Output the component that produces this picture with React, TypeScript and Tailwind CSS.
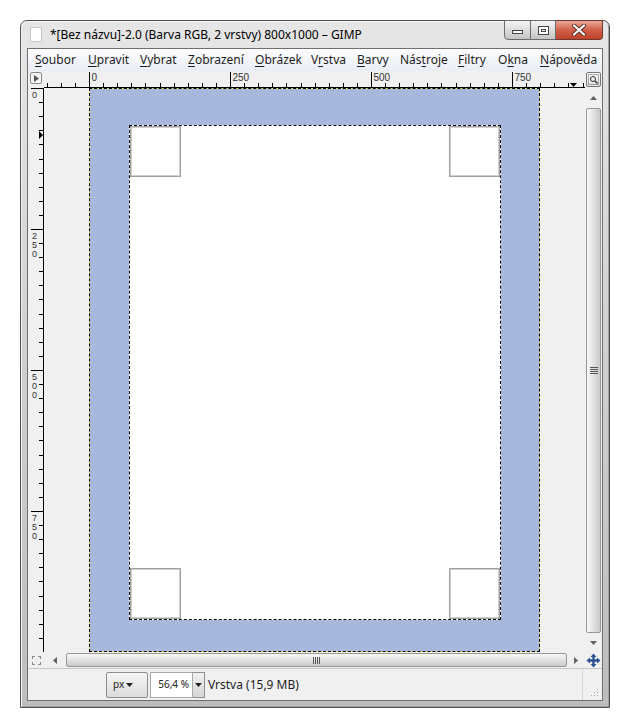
import React from 'react';

const SCALE = 0.564;

const menu = [
  { pre: '', u: 'S', post: 'oubor', w: 'w-[53px]' },
  { pre: '', u: 'U', post: 'pravit', w: 'w-[52px]' },
  { pre: '', u: 'V', post: 'ybrat', w: 'w-[48px]' },
  { pre: '', u: 'Z', post: 'obrazení', w: 'w-[67px]' },
  { pre: '', u: 'O', post: 'brázek', w: 'w-[56px]' },
  { pre: 'V', u: 'r', post: 'stva', w: 'w-[46px]' },
  { pre: '', u: 'B', post: 'arvy', w: 'w-[43px]' },
  { pre: 'Nás', u: 't', post: 'roje', w: 'w-[58px]' },
  { pre: '', u: 'F', post: 'iltry', w: 'w-[40px]' },
  { pre: 'O', u: 'k', post: 'na', w: 'w-[42px]' },
  { pre: '', u: 'N', post: 'ápověda', w: 'w-[60px]' },
];

function range(from: number, to: number, step: number) {
  const out: number[] = [];
  for (let v = from; v <= to; v += step) out.push(v);
  return out;
}

// top ruler, origin 45px from the left edge
function HRuler() {
  const ticks = range(-75, 950, 25);
  return (
    <svg width="541" height="17" className="block">
      <line x1="0" y1="16.5" x2="541" y2="16.5" stroke="#000" />
      {ticks.map((t) => {
        const x = Math.round(45 + t * SCALE) + 0.5;
        if (t % 250 === 0) {
          return (
            <g key={t}>
              <line x1={x} y1="1" x2={x} y2="17" stroke="#000" />
              <text x={x + 2} y="10" fontSize="10" fill="#333" fontFamily="Liberation Sans, sans-serif">
                {t}
              </text>
            </g>
          );
        }
        return <line key={t} x1={x} y1="12" x2={x} y2="17" stroke="#000" />;
      })}
      <polygon points="526,12 533,12 529.5,16" fill="#000" />
    </svg>
  );
}

function VRuler() {
  const ticks = range(0, 975, 25);
  return (
    <svg width="16" height="564" className="block">
      <line x1="15.5" y1="0" x2="15.5" y2="564" stroke="#000" />
      {ticks.map((t) => {
        const y = Math.round(t * SCALE) + 0.5;
        if (t % 250 === 0) {
          const digits = String(t).split('');
          return (
            <g key={t}>
              <line x1="3" y1={y} x2="16" y2={y} stroke="#000" />
              {digits.map((d, i) => (
                <text key={i} x="4" y={y + 9 + i * 9} fontSize="9" fill="#333" fontFamily="Liberation Sans, sans-serif">
                  {d}
                </text>
              ))}
            </g>
          );
        }
        return <line key={t} x1="11" y1={y} x2="16" y2={y} stroke="#000" />;
      })}
      <polygon points="11,43 15,47 11,51" fill="#000" />
    </svg>
  );
}

function CaptionButtons() {
  return (
    <div className="absolute right-[6px] top-[-1px] flex h-[20px]">
      <div className="flex h-full w-[27px] items-end justify-center rounded-bl-[4px] border border-[#6b6b6b] bg-gradient-to-b from-[#f4f4f4] via-[#dcdcdc] to-[#c4c4c4] pb-[5px]">
        <div className="h-[4px] w-[11px] border border-[#444] bg-white" />
      </div>
      <div className="flex h-full w-[25px] items-center justify-center border-y border-r border-[#6b6b6b] bg-gradient-to-b from-[#f4f4f4] via-[#dcdcdc] to-[#c4c4c4]">
        <div className="flex h-[9px] w-[11px] items-center justify-center border border-[#444] bg-white">
          <div className="h-[3px] w-[5px] border border-[#444]" />
        </div>
      </div>
      <div className="flex h-full w-[47px] items-center justify-center rounded-br-[4px] border-y border-r border-[#6b3b30] bg-gradient-to-b from-[#e8a898] via-[#d0604a] to-[#c04028]">
        <svg width="14" height="12" viewBox="0 0 14 12">
          <path d="M2 1.5 L12 10.5 M12 1.5 L2 10.5" stroke="#5a2a20" strokeWidth="4" strokeLinecap="round" />
          <path d="M2 1.5 L12 10.5 M12 1.5 L2 10.5" stroke="#fff" strokeWidth="2.2" strokeLinecap="round" />
        </svg>
      </div>
    </div>
  );
}

function Corner() {
  return (
    <div className="h-[51px] w-[51px] border border-[#a0a0a0] bg-white">
      <div className="h-full w-full border border-[#d0d0d0]" />
    </div>
  );
}

export default function App() {
  return (
    <div
      className="h-[728px] w-[630px] bg-white pl-[20px] pt-[20px]"
      style={{ fontFamily: '"Noto Sans", "Open Sans", sans-serif' }}
    >
      <div className="relative flex h-[688px] w-[590px] flex-col rounded-t-[7px] border border-[#505050] bg-gradient-to-b from-[#e6e6e6] via-[#cfcfcf] to-[#bdbdbd] px-[6px] pb-[6px] pt-[27px] shadow-[inset_1px_1px_0_#f4f4f4,inset_-1px_-1px_0_#a0a0a0]">
        {/* title bar */}
        <div className="absolute left-[9px] top-[6px] flex items-center gap-[8px]">
          <div className="h-[15px] w-[12px] border border-[#c8c8c8] bg-white" />
          <span className="text-[12px] leading-none text-black">
            *[Bez názvu]-2.0 (Barva RGB, 2 vrstvy) 800x1000 – GIMP
          </span>
        </div>
        <CaptionButtons />

        {/* client */}
        <div className="flex flex-1 flex-col border border-[#6f6f6f] bg-[#f0f0f0]">
          {/* menu */}
          <div className="flex h-[22px] items-center bg-gradient-to-b from-[#fdfdfe] to-[#e9edf4] pl-[7px] text-[12px] text-[#1e1e1e]">
            {menu.map((m) => (
              <span key={m.u + m.post} className={`${m.w} shrink-0 whitespace-nowrap`}>
                {m.pre}
                <span className="underline underline-offset-2">{m.u}</span>
                {m.post}
              </span>
            ))}
          </div>

          {/* rulers row */}
          <div className="flex h-[17px]">
            <div className="flex w-[16px] items-start justify-center pt-[1px]">
              <div className="flex h-[12px] w-[12px] items-center justify-center rounded-[2px] border border-[#8a8a8a] bg-[#f4f4f4]">
                <svg width="6" height="7" viewBox="0 0 6 7">
                  <polygon points="1,0 6,3.5 1,7" fill="#555" />
                </svg>
              </div>
            </div>
            <HRuler />
            <div className="flex w-[17px] items-center justify-center">
              <div className="flex h-[15px] w-[15px] items-center justify-center rounded-[2px] border border-[#777] bg-gradient-to-b from-[#fafafa] to-[#dedede]">
                <svg width="11" height="11" viewBox="0 0 11 11">
                  <rect x="0.5" y="0.5" width="10" height="10" fill="none" stroke="#666" strokeDasharray="1 1" />
                  <circle cx="5" cy="5" r="2.5" fill="none" stroke="#333" />
                  <line x1="7" y1="7" x2="9.5" y2="9.5" stroke="#333" strokeWidth="1.5" />
                </svg>
              </div>
            </div>
          </div>

          {/* main */}
          <div className="flex h-[564px]">
            <VRuler />
            <div className="flex-1 overflow-hidden pl-[45px]">
              <div className="h-[564px] w-[451px] border border-[#dfe86e] bg-[#a7b8dc] pl-[39px] pt-[36px] outline-1 -outline-offset-1 outline-black outline-dashed">
                <div className="flex h-[495px] w-[372px] flex-col justify-between border border-dashed border-black bg-white">
                  <div className="flex justify-between">
                    <Corner />
                    <Corner />
                  </div>
                  <div className="flex justify-between">
                    <Corner />
                    <Corner />
                  </div>
                </div>
              </div>
            </div>
            {/* vertical scrollbar */}
            <div className="flex w-[17px] flex-col bg-[#f0f0f0]">
              <div className="flex h-[20px] items-center justify-center">
                <svg width="7" height="4" viewBox="0 0 7 4">
                  <polygon points="0,4 7,4 3.5,0" fill="#606060" />
                </svg>
              </div>
              <div className="mx-[1px] flex flex-1 items-center justify-center rounded-[2px] border border-[#979797] bg-gradient-to-r from-[#f8f8f8] via-[#e2e2e2] to-[#c9c9c9]">
                <div className="flex flex-col gap-[1px]">
                  <div className="h-[1px] w-[8px] bg-[#555]" />
                  <div className="h-[1px] w-[8px] bg-[#555]" />
                  <div className="h-[1px] w-[8px] bg-[#555]" />
                  <div className="h-[1px] w-[8px] bg-[#555]" />
                </div>
              </div>
              <div className="flex h-[19px] items-center justify-center">
                <svg width="7" height="4" viewBox="0 0 7 4">
                  <polygon points="0,0 7,0 3.5,4" fill="#606060" />
                </svg>
              </div>
            </div>
          </div>

          {/* horizontal scrollbar row */}
          <div className="flex h-[16px]">
            <div className="flex w-[16px] items-center justify-center">
              <div className="h-[9px] w-[9px] border border-dashed border-[#8a8a8a]" />
            </div>
            <div className="flex w-[541px]">
              <div className="flex w-[22px] items-center justify-center">
                <svg width="4" height="7" viewBox="0 0 4 7">
                  <polygon points="4,0 4,7 0,3.5" fill="#606060" />
                </svg>
              </div>
              <div className="my-[1px] flex flex-1 items-center justify-center rounded-[2px] border border-[#979797] bg-gradient-to-b from-[#f8f8f8] via-[#e2e2e2] to-[#c9c9c9]">
                <div className="flex gap-[1px]">
                  <div className="h-[7px] w-[1px] bg-[#555]" />
                  <div className="h-[7px] w-[1px] bg-[#555]" />
                  <div className="h-[7px] w-[1px] bg-[#555]" />
                  <div className="h-[7px] w-[1px] bg-[#555]" />
                </div>
              </div>
              <div className="flex w-[18px] items-center justify-center">
                <svg width="4" height="7" viewBox="0 0 4 7">
                  <polygon points="0,0 0,7 4,3.5" fill="#606060" />
                </svg>
              </div>
            </div>
            <div className="flex w-[17px] items-center justify-center">
              <svg width="15" height="15" viewBox="0 0 15 15">
                <path d="M7.5 0.5 L10.5 4 H8.7 V6.3 H11 V4.5 L14.5 7.5 L11 10.5 V8.7 H8.7 V11 H10.5 L7.5 14.5 L4.5 11 H6.3 V8.7 H4 V10.5 L0.5 7.5 L4 4.5 V6.3 H6.3 V4 H4.5 Z" fill="#2d5190" />
              </svg>
            </div>
          </div>

          {/* status bar */}
          <div className="flex h-[32px] border-t border-[#c8c8c8]">
            <div className="flex flex-1 items-center border-r border-[#d4d4d4] pl-[78px]">
              <div className="flex h-[26px] w-[42px] items-center gap-[2px] rounded-[2px] border border-[#8e8e8e] bg-gradient-to-b from-[#f6f6f6] to-[#dcdcdc] pl-[6px] text-[10px] text-[#222]">
                px
                <svg width="7" height="4" viewBox="0 0 7 4">
                  <polygon points="0,0 7,0 3.5,4" fill="#222" />
                </svg>
              </div>
              <div className="ml-[2px] flex h-[26px] w-[43px] items-center justify-end border border-[#a8a8a8] bg-white pr-[3px] text-[10px] text-[#222]">
                56,4 %
              </div>
              <div className="flex h-[26px] w-[12px] items-center justify-center border-y border-r border-[#8e8e8e] bg-gradient-to-b from-[#f2f2f2] to-[#d6d6d6]">
                <svg width="7" height="4" viewBox="0 0 7 4">
                  <polygon points="0,0 7,0 3.5,4" fill="#222" />
                </svg>
              </div>
              <span className="ml-[3px] text-[12px] text-[#1e1e1e]">Vrstva (15,9 MB)</span>
            </div>
            <div className="flex w-[19px] items-end justify-end pb-[3px] pr-[3px]">
              <svg width="8" height="8" viewBox="0 0 8 8">
                <rect x="6" y="0" width="1" height="1" fill="#aaa" />
                <rect x="3" y="3" width="1" height="1" fill="#aaa" />
                <rect x="6" y="3" width="1" height="1" fill="#aaa" />
                <rect x="0" y="6" width="1" height="1" fill="#aaa" />
                <rect x="3" y="6" width="1" height="1" fill="#aaa" />
                <rect x="6" y="6" width="1" height="1" fill="#aaa" />
              </svg>
            </div>
          </div>
        </div>
      </div>
    </div>
  );
}
